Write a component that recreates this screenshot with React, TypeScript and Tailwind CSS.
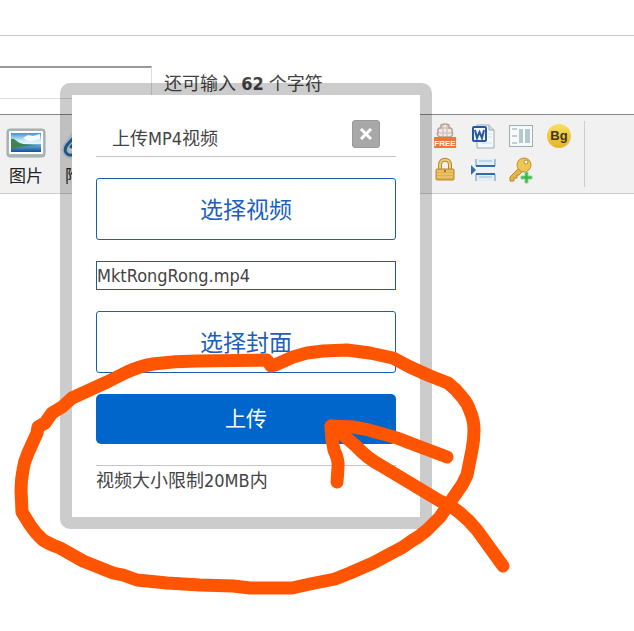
import React from 'react';

const PictureIcon = () => (
    <svg width="42" height="32" viewBox="0 0 42 32" className="shrink-0">
        <defs>
            <linearGradient id="sky" x1="0" y1="0" x2="0" y2="1">
                <stop offset="0" stopColor="#3f8fe0" />
                <stop offset="0.55" stopColor="#c9e9f8" />
                <stop offset="1" stopColor="#ffffff" />
            </linearGradient>
            <linearGradient id="sea" x1="0" y1="0" x2="0" y2="1">
                <stop offset="0" stopColor="#6db9e2" />
                <stop offset="1" stopColor="#174f9c" />
            </linearGradient>
        </defs>
        <rect x="2" y="2" width="38" height="28" rx="3" fill="#a9b8b6" stroke="#9cabA9" />
        <rect x="4" y="4" width="34" height="23" rx="1" fill="#fff" />
        <rect x="6" y="6" width="30" height="13" fill="url(#sky)" />
        <rect x="6" y="17" width="30" height="8" fill="url(#sea)" />
        <path d="M6 12c3-1 4 1 7 3s8 3 22 3c-9 1-15 1-20 2s-6 2-9 2z" fill="#3f8550" />
        <path d="M18 11l5-3 5 1 7-2v5l-10 3z" fill="#f2fafd" />
    </svg>
);

const ClipIcon = () => (
    <svg width="42" height="32" viewBox="0 0 42 32" fill="none" className="shrink-0">
        <path d="M15 6L6 18c-5 8 4 14 9 7L31 7" stroke="#cfdde8" strokeWidth="7" />
        <path d="M17 6L6 18c-6 8 4 14 9 7L31 7M10 20l9-10" stroke="#236aa8" strokeWidth="3" strokeLinecap="round" />
    </svg>
);

const FreeIcon = () => (
    <svg width="24" height="26" viewBox="0 0 24 26">
        <g fill="none" stroke="#b7a198" strokeWidth="1.5">
            <path d="M10 1v13M14 1v13M6 5h12M5 10h14" />
            <path d="M8 2q4-2 8 0v3q4 0 3 4 2 3-2 5H7q-4-2-2-5-1-4 3-4z" fill="#f2e6e0" fillOpacity="0.5" />
        </g>
        <rect x="1" y="14" width="22" height="11" fill="#ee7638" />
        <text x="12" y="23" textAnchor="middle" fontSize="8" fontWeight="700" fill="#fff" fontFamily="Liberation Sans">FREE</text>
    </svg>
);

const WordIcon = () => (
    <svg width="24" height="26" viewBox="0 0 24 26">
        <path d="M6 2h12l5 5v18H6z" fill="#f4f8fa" stroke="#9aabb3" />
        <path d="M18 2v5h5" fill="#d7e1e5" stroke="#9aabb3" />
        <path d="M17 11h4M17 14h4M10 20h11" stroke="#d3e0e7" />
        <rect x="2" y="4" width="13" height="14" rx="1" fill="#f4f7fc" stroke="#2856a7" strokeWidth="2" />
        <path d="M4 7l2 8 2.500-6 2.500 6 2-8" fill="none" stroke="#2856a7" strokeWidth="2" />
    </svg>
);

const LayoutIcon = () => (
    <svg width="26" height="24" viewBox="0 0 26 24">
        <rect x="1.500" y="1.500" width="23" height="21" fill="#f7fafa" stroke="#9cafb2" />
        <path d="M4 5h5M4 12h5M4 19h5" stroke="#c0d0d2" strokeWidth="2" />
        <path d="M11 5h4v14h-4zM17 5h5v14h-5z" fill="#b4c9cd" />
    </svg>
);

const BgIcon = () => (
    <svg width="26" height="26" viewBox="0 0 26 26">
        <defs>
            <linearGradient id="gold" x1="0" y1="0" x2="0" y2="1">
                <stop offset="0" stopColor="#f8df64" />
                <stop offset="1" stopColor="#e3b51f" />
            </linearGradient>
        </defs>
        <circle cx="13" cy="13" r="12" fill="url(#gold)" />
        <text x="13" y="17" textAnchor="middle" fontSize="13" fontWeight="700" fill="#42381d" fontFamily="Liberation Sans">Bg</text>
    </svg>
);

const LockIcon = () => (
    <svg width="24" height="26" viewBox="0 0 24 26">
        <path d="M7 12V8c0-7 10-7 10 0v4" fill="none" stroke="#b38a30" strokeWidth="4" />
        <path d="M7 12V8c0-7 10-7 10 0v4" fill="none" stroke="#ecd07c" strokeWidth="2" />
        <rect x="3" y="12" width="18" height="11" rx="1" fill="#dfae45" stroke="#b88b2d" />
        <path d="M4 14h16M4 17h16M4 20h16" stroke="#f1d58a" />
        <circle cx="12" cy="14" r="1" fill="#7c5c1c" />
    </svg>
);

const PageBreakIcon = () => (
    <svg width="26" height="26" viewBox="0 0 26 26">
        <path d="M1 8l5 5-5 5z" fill="#2f6fae" />
        <path d="M6 2v8h19V2zM6 24v-7h19v7z" fill="#e4edf4" />
        <path d="M6 2v7M25 2v7M6 24v-7M25 24v-7" stroke="#6a93b8" />
        <path d="M6 9h19M6 17h19" stroke="#316ca4" strokeWidth="2" />
        <path d="M9 4h13M9 20h13" stroke="#9fb9cd" />
    </svg>
);

const KeyIcon = () => (
    <svg width="26" height="28" viewBox="0 0 26 28">
        <path d="M11 12L2 21v4h4v-3h3v-3h2l4-4z" fill="#e8b547" stroke="#b8862d" />
        <circle cx="16" cy="9" r="7" fill="#efc553" stroke="#bf8e2e" />
        <circle cx="18" cy="6" r="2" fill="#fff8dc" stroke="#bf8e2e" />
        <path d="M17 16h3v4h4v3h-4v4h-3v-4h-4v-3h4z" fill="#3ab54a" stroke="#8fd694" />
    </svg>
);

const tools = [
    { name: '免费素材', icon: <FreeIcon /> },
    { name: '导入Word', icon: <WordIcon /> },
    { name: '版式', icon: <LayoutIcon /> },
    { name: '背景', icon: <BgIcon /> },
    { name: '加密', icon: <LockIcon /> },
    { name: '分页', icon: <PageBreakIcon /> },
    { name: '添加密钥', icon: <KeyIcon /> },
];

const UploadDialog = () => {
    return (
        <div role="dialog" aria-label="上传MP4视频" className="absolute left-[60px] top-[83px] w-[372px] rounded-[10px] bg-black/20 p-3">
            <div className="flex flex-col gap-[21px] bg-white px-6 pb-[21px]">
                <div className="flex h-[62px] items-end justify-between border-b border-[#c4c4c4] px-4 pb-2">
                    <h2 className="leading-[18px]">上传MP4视频</h2>
                    <button aria-label="关闭" className="flex size-7 items-center justify-center rounded-[3px] border border-[#999] bg-[#a8a8a8]">
                        <svg width="14" height="14" viewBox="0 0 14 14">
                            <path d="M2 2l10 10M12 2L2 12" stroke="#fff" strokeWidth="3" />
                        </svg>
                    </button>
                </div>
                <button className="h-[62px] rounded-[3px] border border-[#1a5fae] pt-0.5 text-[23px] text-[#1c5fbd]">选择视频</button>
                <input aria-label="视频文件" defaultValue="MktRongRong.mp4" className="h-[29px] w-full border border-[#1a5c99] outline-none" />
                <button className="h-[62px] rounded-[3px] border border-[#1a5fae] pt-0.5 text-[23px] text-[#1c5fbd]">选择封面</button>
                <button className="h-[50px] rounded-[5px] bg-[#0066cc] pt-0.5 text-[21px] text-white">上传</button>
                <p className="border-t border-[#c4c4c4] leading-[30px]">视频大小限制20MB内</p>
            </div>
        </div>
    );
};

const Marker = () => (
    <svg
        width="634"
        height="631"
        viewBox="0 0 634 631"
        fill="none"
        stroke="#ff5500"
        strokeWidth="13"
        strokeLinecap="round"
        strokeLinejoin="round"
        className="pointer-events-none absolute left-0 top-0"
    >
        <path d="M271 366L275 365L293 357L307 353L323 351L347 350L370 353L393 358L410 367L430 376L448 383Q456 389 462 397Q468 404 470 411Q474 420 474 430Q474 440 472 450L467 475L462 485L453 498L440 517L427 530Q419 537 410 542L403 547L373 563L350 573L335 579L310 584L292 588L250 588L233 586L200 585L167 583L137 580L123 575L113 573L83 561L60 548Q49 544 43 540Q36 534 30 525L22 512L21 490Q21 480 23 470Q24 462 28 453L37 433L38 427L45 423L52 413L62 407L72 398L83 393L107 382L127 372Q140 366 153 364Q175 361 197 361L267 360L271 366" />
        <path d="M331 426L353 427Q368 429 383 434Q396 437 410 443L447 457" />
        <path d="M331 426Q331 438 334 450Q339 460 338 468L337 482" />
        <path d="M336 429L356 446Q367 458 380 465L410 483L440 501Q452 506 460 513Q469 520 477 530L490 548L503 566" />
    </svg>
);

const App = () => {
    return (
        <div className="relative min-h-screen overflow-hidden bg-white text-[18px] text-[#444] [font-family:'DejaVu_Sans_Condensed','Noto_Sans_CJK_SC',sans-serif]">
            <header className="h-9 border-b border-[#c8c8c8]"></header>
            <main className="pt-[30px]">
                <div className="flex items-end gap-3">
                    <input aria-label="标题" className="h-[33px] w-[152px] border-b border-r border-t-2 border-b-[#ddd] border-r-[#ddd] border-t-[#999] outline-none" />
                    <p className="leading-[30px]">还可输入 <b>62</b> 个字符</p>
                </div>
                <div role="toolbar" className="mt-[15px] flex h-20 items-start overflow-hidden border-b border-t border-b-[#ccc] border-t-[#888] bg-[#f1f1f1] pt-3 text-[17px] text-[#222]">
                    <button className="flex w-[52px] shrink-0 flex-col items-center">
                        <PictureIcon />
                        <span className="leading-[34px]">图片</span>
                    </button>
                    <button className="flex w-[60px] shrink-0 flex-col items-center">
                        <ClipIcon />
                        <span className="leading-[34px]">附件</span>
                    </button>
                    <div className="-mt-2 ml-[314px] grid shrink-0 auto-rows-[34px] grid-cols-[repeat(4,38px)]">
                        {tools.map((tool) => (
                            <button key={tool.name} aria-label={tool.name} className="flex items-center justify-center">
                                {tool.icon}
                            </button>
                        ))}
                    </div>
                    <div className="-mt-1.5 ml-1.5 h-[66px] border-l border-[#ccc]"></div>
                </div>
            </main>
            <UploadDialog />
            <Marker />
        </div>
    );
};
export default App;
